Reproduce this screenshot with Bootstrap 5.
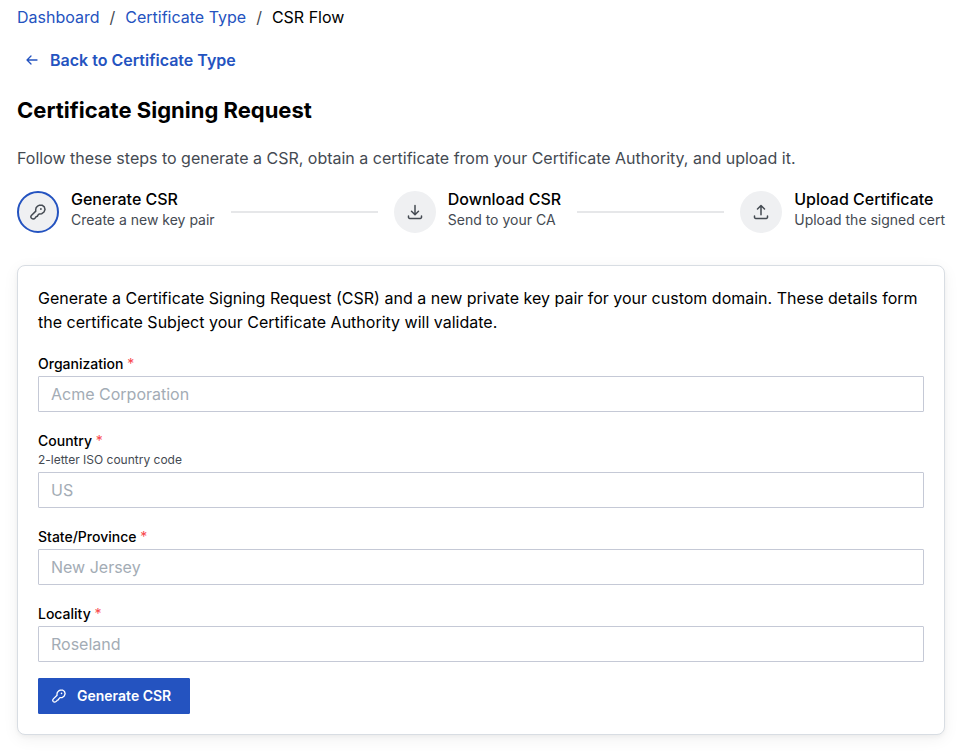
<!DOCTYPE html>
<html lang="en">
<head>
<meta charset="utf-8">
<meta name="viewport" content="width=device-width, initial-scale=1">
<title>Certificate Signing Request</title>
<link href="https://cdn.jsdelivr.net/npm/bootstrap@5.3.0/dist/css/bootstrap.min.css" rel="stylesheet">
<style>
body { font-family: Inter, "Liberation Sans", sans-serif; font-size: 16px; line-height: 24px; color: #000; background: #fff; }
.page { padding: 5px 33px 19px 17px; }
a { color: #2453c0; text-decoration: none; }
.crumbs { --bs-breadcrumb-divider-color: #444a52; --bs-breadcrumb-item-padding-x: 10px; --bs-breadcrumb-item-active-color: #000; margin-bottom: 19px; }
.back { gap: 12px; padding: 0 9px; font-weight: 600; }
.title { font-size: 22px; line-height: 28px; font-weight: 700; margin: 24px 0 22px; }
.intro { color: #444a52; margin-bottom: 21px; }
.steps { gap: 16px; margin-bottom: 32px; }
.step { gap: 12px; }
.step-icon { width: 42px; height: 42px; background: #eff0f2; color: #444a52; border: 2px solid #eff0f2; }
.step-current .step-icon { border-color: #2453c0; }
.step-name { font-weight: 500; line-height: 16px; margin-bottom: 3px; }
.step-note { font-size: 14px; line-height: 20px; color: #444a52; }
.step-line { height: 2px; background: #e6e7e9; }
.panel { --bs-card-border-color: #d8dde3; --bs-card-border-radius: 8px; --bs-card-color: #000; box-shadow: 0 4px 16px rgba(0,0,0,.06), 0 2px 4px rgba(0,0,0,.04); }
.panel-body { padding: 20px; }
.panel-text { margin-bottom: 20px; }
.field { margin-bottom: 19px; }
.field-last { margin-bottom: 16px; }
.field label { display: block; font-size: 14px; line-height: 20px; font-weight: 500; margin-bottom: 2px; }
.field .hint { font-size: 12px; line-height: 16px; color: #444a52; margin: 1px 0 4px; }
.req { color: #f8474c; font-weight: 400; }
.field .form-control { height: 36px; padding: 5px 12px; font-size: 16px; line-height: 24px; border-color: #c5c9d6; border-radius: 1px; }
.field .form-control::placeholder { color: #a3acb5; }
.submit { --bs-btn-bg: #2453c0; --bs-btn-border-color: #2453c0; --bs-btn-hover-bg: #1d459f; --bs-btn-font-weight: 600; gap: 11px; height: 36px; padding: 0 18px 0 13px; font-size: 14px; line-height: 20px; border-radius: 1px; }
</style>
<script src="https://cdn.jsdelivr.net/npm/bootstrap@5.3.0/dist/js/bootstrap.bundle.min.js" defer></script>
</head>
<body>
<svg class="d-none" aria-hidden="true">
  <symbol id="key" viewBox="0 0 16 16">
    <path d="M5.8 7.1C5.4 5 6.1 3.2 7.6 2.2L9.5 1.2H12L14.3 2.9 15 5.4 14 8 11.8 9.7 9.1 9.9 7.8 11.3 7.3 12.3 6.1 12.7 5.2 13.9C4.1 15.1 2.3 15.3 1.3 14.1.6 13.2.8 12.1 1.6 11.3z" fill="none" stroke="currentColor" stroke-width="1.5" stroke-linejoin="round"/>
    <circle cx="10.9" cy="5" r=".9" fill="currentColor"/>
  </symbol>
</svg>
<main class="page">
  <nav aria-label="Breadcrumb">
    <ol class="breadcrumb crumbs">
      <li class="breadcrumb-item"><a href="#">Dashboard</a></li>
      <li class="breadcrumb-item"><a href="#">Certificate Type</a></li>
      <li class="breadcrumb-item active" aria-current="page">CSR Flow</li>
    </ol>
  </nav>
  <a href="#" class="back d-inline-flex align-items-center">
    <svg width="12" height="12" viewBox="0 0 12 12" fill="none" stroke="currentColor" stroke-width="1.3" stroke-linecap="round" stroke-linejoin="round" aria-hidden="true"><path d="M11 6H1M5 2L1 6l4 4"/></svg>
    Back to Certificate Type
  </a>
  <h1 class="title">Certificate Signing Request</h1>
  <p class="intro">Follow these steps to generate a CSR, obtain a certificate from your Certificate Authority, and upload it.</p>

  <div class="steps d-flex align-items-center">
    <div class="step step-current d-flex align-items-start" aria-current="step">
      <span class="step-icon rounded-circle d-flex align-items-center justify-content-center flex-shrink-0">
        <svg width="16" height="16" aria-hidden="true"><use href="#key"/></svg>
      </span>
      <div class="text-nowrap"><div class="step-name">Generate CSR</div><div class="step-note">Create a new key pair</div></div>
    </div>
    <div class="step-line flex-grow-1"></div>
    <div class="step d-flex align-items-start">
      <span class="step-icon rounded-circle d-flex align-items-center justify-content-center flex-shrink-0">
        <svg width="16" height="16" viewBox="0 0 16 16" fill="none" stroke="currentColor" stroke-width="1.5" stroke-linecap="round" stroke-linejoin="round" aria-hidden="true"><path d="M8 1.5v9M4.5 7.2L8 10.7l3.5-3.5M1.5 12v1.2a1.2 1.2 0 0 0 1.2 1.2h10.6a1.2 1.2 0 0 0 1.2-1.2V12"/></svg>
      </span>
      <div class="text-nowrap"><div class="step-name">Download CSR</div><div class="step-note">Send to your CA</div></div>
    </div>
    <div class="step-line flex-grow-1"></div>
    <div class="step d-flex align-items-start">
      <span class="step-icon rounded-circle d-flex align-items-center justify-content-center flex-shrink-0">
        <svg width="16" height="16" viewBox="0 0 16 16" fill="none" stroke="currentColor" stroke-width="1.5" stroke-linecap="round" stroke-linejoin="round" aria-hidden="true"><path d="M8 10.7V1.5M4.5 5L8 1.5 11.5 5M1.5 12v1.2a1.2 1.2 0 0 0 1.2 1.2h10.6a1.2 1.2 0 0 0 1.2-1.2V12"/></svg>
      </span>
      <div class="text-nowrap"><div class="step-name">Upload Certificate</div><div class="step-note">Upload the signed cert</div></div>
    </div>
  </div>

  <section class="card panel">
    <form class="card-body panel-body">
      <p class="panel-text">Generate a Certificate Signing Request (CSR) and a new private key pair for your custom domain. These details form the certificate Subject your Certificate Authority will validate.</p>
      <div class="field">
        <label for="organization">Organization <span class="req">*</span></label>
        <input type="text" class="form-control" id="organization" placeholder="Acme Corporation" required>
      </div>
      <div class="field">
        <label class="mb-0" for="country">Country <span class="req">*</span></label>
        <div class="hint" id="country-hint">2-letter ISO country code</div>
        <input type="text" class="form-control" id="country" placeholder="US" aria-describedby="country-hint" required>
      </div>
      <div class="field">
        <label for="state">State/Province <span class="req">*</span></label>
        <input type="text" class="form-control" id="state" placeholder="New Jersey" required>
      </div>
      <div class="field field-last">
        <label for="locality">Locality <span class="req">*</span></label>
        <input type="text" class="form-control" id="locality" placeholder="Roseland" required>
      </div>
      <button type="submit" class="btn btn-primary submit d-inline-flex align-items-center">
        <svg width="14" height="14" aria-hidden="true"><use href="#key"/></svg>
        Generate CSR
      </button>
    </form>
  </section>
</main>
</body>
</html>
